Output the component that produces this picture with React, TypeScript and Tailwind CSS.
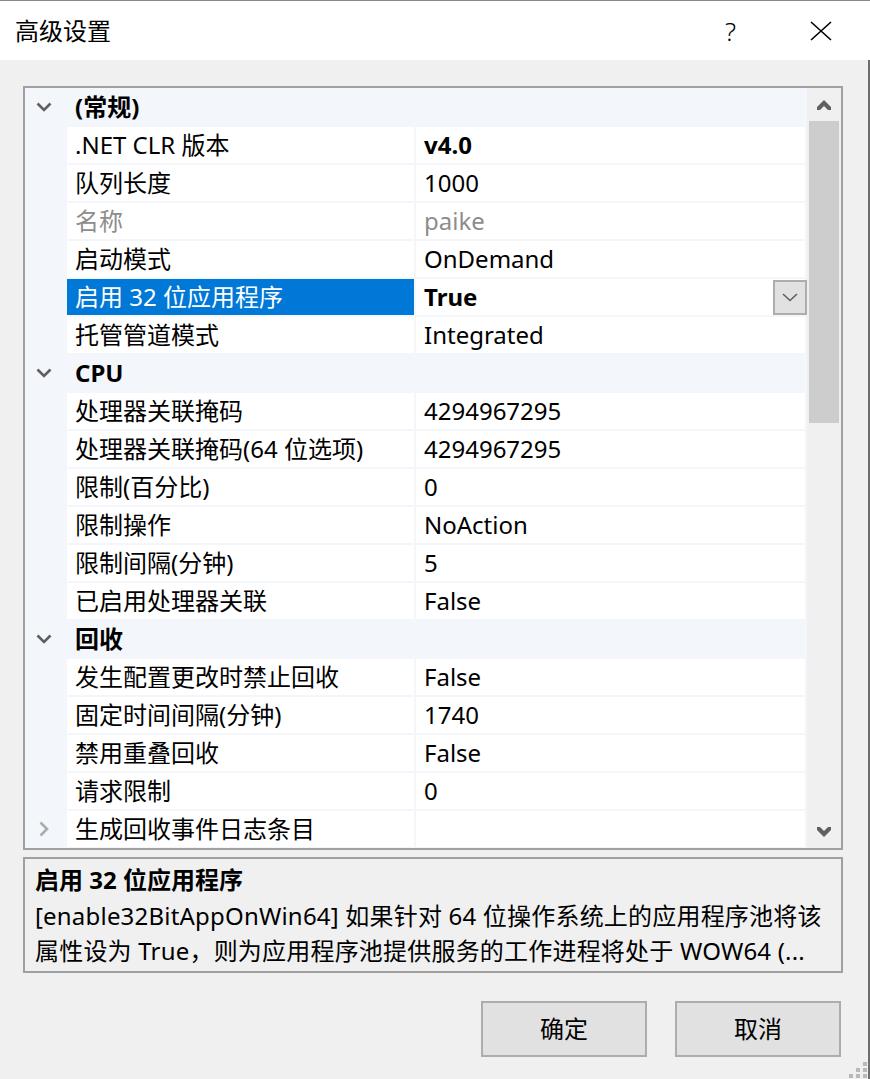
import { type ReactNode } from "react";

type Row =
  | { kind: "cat"; label: string }
  | {
      kind: "prop";
      name: string;
      value: string;
      bold?: boolean;
      disabled?: boolean;
      selected?: boolean;
      collapsed?: boolean;
    };

const rows: Row[] = [
  { kind: "cat", label: "(常规)" },
  { kind: "prop", name: ".NET CLR 版本", value: "v4.0", bold: true },
  { kind: "prop", name: "队列长度", value: "1000" },
  { kind: "prop", name: "名称", value: "paike", disabled: true },
  { kind: "prop", name: "启动模式", value: "OnDemand" },
  { kind: "prop", name: "启用 32 位应用程序", value: "True", bold: true, selected: true },
  { kind: "prop", name: "托管管道模式", value: "Integrated" },
  { kind: "cat", label: "CPU" },
  { kind: "prop", name: "处理器关联掩码", value: "4294967295" },
  { kind: "prop", name: "处理器关联掩码(64 位选项)", value: "4294967295" },
  { kind: "prop", name: "限制(百分比)", value: "0" },
  { kind: "prop", name: "限制操作", value: "NoAction" },
  { kind: "prop", name: "限制间隔(分钟)", value: "5" },
  { kind: "prop", name: "已启用处理器关联", value: "False" },
  { kind: "cat", label: "回收" },
  { kind: "prop", name: "发生配置更改时禁止回收", value: "False" },
  { kind: "prop", name: "固定时间间隔(分钟)", value: "1740" },
  { kind: "prop", name: "禁用重叠回收", value: "False" },
  { kind: "prop", name: "请求限制", value: "0" },
  { kind: "prop", name: "生成回收事件日志条目", value: "", collapsed: true },
];

function ChevronDown() {
  return (
    <svg width="16" height="10" viewBox="0 0 16 10" className="block">
      <path d="M1.5 1.5 L8 8 L14.5 1.5" fill="none" stroke="#5f5f5f" strokeWidth="2.6" />
    </svg>
  );
}

function ChevronRight() {
  return (
    <svg width="10" height="16" viewBox="0 0 10 16" className="block">
      <path d="M1.5 1.5 L8 8 L1.5 14.5" fill="none" stroke="#ababab" strokeWidth="2.6" />
    </svg>
  );
}

function ScrollArrow({ up }: { up?: boolean }) {
  return (
    <svg width="14" height="12" viewBox="0 0 14 12" className="block">
      <path
        d={up ? "M0 8 L7 1 L14 8 L14 11 L11 11 L7 7 L3 11 L0 11 Z" : "M0 4 L7 11 L14 4 L14 1 L11 1 L7 5 L3 1 L0 1 Z"}
        fill="#606060"
      />
    </svg>
  );
}

function CategoryRow({ label }: { label: string }) {
  return (
    <div className="flex h-[38px] items-center">
      <div className="w-[42px] pl-[11px]">
        <ChevronDown />
      </div>
      <div className="pl-2 font-bold">{label}</div>
    </div>
  );
}

function PropRow({ row }: { row: Extract<Row, { kind: "prop" }> }) {
  const nameColor = row.selected
    ? "bg-[#0078d7] text-white"
    : row.disabled
      ? "bg-white text-[#8d8d8d]"
      : "bg-white text-black";
  return (
    <div className="flex h-[38px] py-px pr-[2px]">
      <div className="w-[42px] flex items-center pl-[14px]">{row.collapsed && <ChevronRight />}</div>
      <div className={`w-[347px] flex items-center pl-2 whitespace-nowrap ${nameColor}`}>{row.name}</div>
      <div className="w-[2px]" />
      <div
        className={`flex-1 bg-white flex items-center pl-2 ${row.bold ? "font-bold" : ""} ${
          row.disabled ? "text-[#8d8d8d]" : "text-black"
        }`}
      >
        {row.value}
        {row.selected && (
          <div className="ml-auto -mr-[2px] h-[35px] w-[34px] border-2 border-[#adadad] bg-[#e1e1e1] flex items-center justify-center">
            <svg width="16" height="9" viewBox="0 0 16 9">
              <path d="M1 1 L8 7.5 L15 1" fill="none" stroke="#606060" strokeWidth="1.6" />
            </svg>
          </div>
        )}
      </div>
    </div>
  );
}

function Button({ children }: { children: ReactNode }) {
  return (
    <button className="w-[166px] h-[56px] border-2 border-[#adadad] bg-[#e1e1e1] text-black text-[24px] flex items-center justify-center">
      {children}
    </button>
  );
}

export default function App() {
  return (
    <div className="relative w-[870px] h-[1079px] overflow-hidden bg-[#f0f0f0] border-t border-[#8a8a8a] text-[24px] text-black font-['Noto_Sans','Noto_Sans_CJK_SC',sans-serif]">
      {/* Title bar */}
      <div className="h-[59px] bg-white flex items-center pl-[15px]">
        <span className="leading-none">高级设置</span>
        <span className="ml-auto mr-[74px] leading-none text-[26px] font-light">?</span>
        <svg width="22" height="20" viewBox="0 0 22 20" className="mr-[38px]">
          <path d="M1 1 L21 19 M21 1 L1 19" stroke="#000" strokeWidth="1.6" />
        </svg>
      </div>

      {/* Body */}
      <div className="h-[1019px] border-r-2 border-[#6e6e6e] pt-[26px] pl-[23px]">
        <div className="w-[820px]">
          {/* Property grid */}
          <div className="border-2 border-[#a0a0a0] bg-[#f3f6fa] flex h-[764px]">
            <div className="w-[782px] flex flex-col">
              {rows.map((row, i) =>
                row.kind === "cat" ? <CategoryRow key={i} label={row.label} /> : <PropRow key={i} row={row} />,
              )}
            </div>
            <div className="flex-1 bg-[#f0f0f0] flex flex-col">
              <div className="h-[33px] flex items-center justify-center">
                <ScrollArrow up />
              </div>
              <div className="h-[302px] mx-[2px] bg-[#cdcdcd]" />
              <div className="flex-1" />
              <div className="h-[33px] flex items-center justify-center">
                <ScrollArrow />
              </div>
            </div>
          </div>

          {/* Description */}
          <div className="mt-[7px] h-[116px] border-2 border-[#a0a0a0] bg-[#f0f0f0] pl-[10px] pt-[2px] whitespace-nowrap overflow-hidden">
            <div className="h-[37px] flex items-center font-bold">启用 32 位应用程序</div>
            <div className="leading-[35px] tracking-[0.2px]">[enable32BitAppOnWin64] 如果针对 64 位操作系统上的应用程序池将该</div>
            <div className="leading-[35px] tracking-[0.2px]">属性设为 True，则为应用程序池提供服务的工作进程将处于 WOW64 (...</div>
          </div>

          {/* Buttons */}
          <div className="mt-[28px] flex justify-end gap-[28px] pr-[2px]">
            <Button>确定</Button>
            <Button>取消</Button>
          </div>
        </div>
      </div>

      {/* Resize grip */}
      <div className="absolute right-[3px] bottom-0 w-[18px] h-[17px]">
        <div className="absolute right-0 top-0 w-[4px] h-[4px] bg-[#b9b9b9]" />
        <div className="absolute right-0 top-[6px] w-[4px] h-[4px] bg-[#b9b9b9]" />
        <div className="absolute right-[7px] top-[6px] w-[4px] h-[4px] bg-[#b9b9b9]" />
        <div className="absolute right-0 top-[12px] w-[4px] h-[4px] bg-[#b9b9b9]" />
        <div className="absolute right-[7px] top-[12px] w-[4px] h-[4px] bg-[#b9b9b9]" />
        <div className="absolute right-[14px] top-[12px] w-[4px] h-[4px] bg-[#b9b9b9]" />
      </div>
    </div>
  );
}
